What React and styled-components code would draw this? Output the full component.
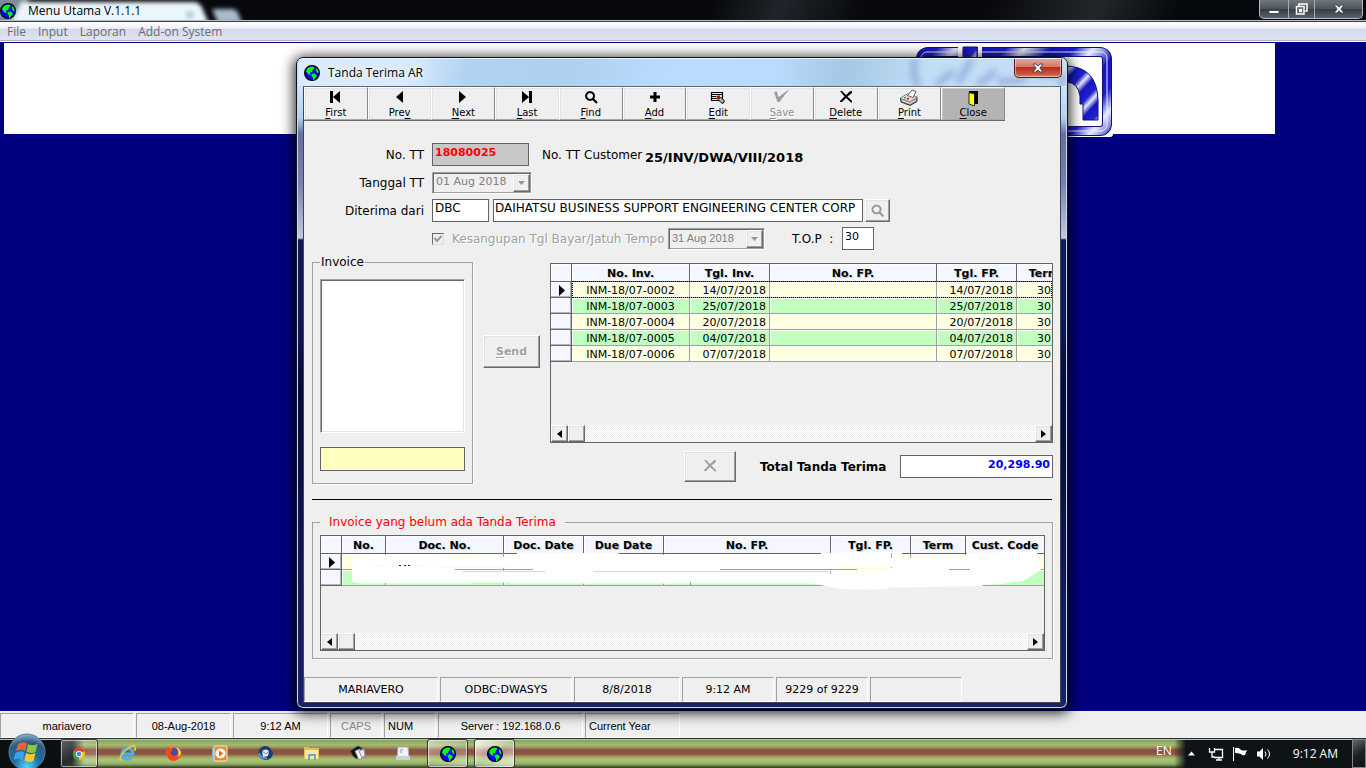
import React from "react";
import styled, { createGlobalStyle, css } from "styled-components";

const UI = `"DejaVu Sans", sans-serif`;
const AERO = `"Open Sans", "Noto Sans", sans-serif`;
const SANS = `"Liberation Sans", sans-serif`;

const Global = createGlobalStyle`
  *, *::before, *::after { box-sizing: border-box; }
  body { margin: 0; background: #000080; font-family: ${UI}; font-size: 11px; color: #000; }
  button, input, select { font: inherit; color: inherit; margin: 0; border-radius: 0; }
  u { text-underline-offset: 2px; }
`;

const raised = css`
  border: 1px solid;
  border-color: #fff #696969 #696969 #fff;
  box-shadow: inset -1px -1px 0 #a0a0a0, inset 1px 1px 0 #e3e3e3;
  background: #efefef;
`;

/* ---------- main window ---------- */
const Screen = styled.div`
  display: flex;
  flex-direction: column;
  min-height: 100vh;
`;
const TitleBar = styled.header`
  position: relative;
  height: 22px;
  display: flex;
  align-items: center;
  gap: 12px;
  font: 12px/20px ${AERO};
  overflow: hidden;
  border-bottom: 1px solid #3a3f48;
  box-shadow: inset 0 -1px 0 #b9bec6;
  background: linear-gradient(115deg, #07090c 0 52%, #20252b 57%, #07090c 63% 72%, #22262b 80%, #05080c 86%);
  h1 { position: relative; font: inherit; margin: 0; }
  & > svg { position: relative; }
`;
const TabGlow = styled.svg`
  && { position: absolute; left: 0; top: 0; }
`;
const CaptionButtons = styled.div`
  position: absolute;
  right: 3px;
  top: 0;
  display: flex;
  height: 19px;
  border: 1px solid #b7bdc4;
  border-top: 0;
  border-radius: 0 0 5px 5px;
  background: linear-gradient(#70777e, #4c535a 50%, #363d44 52%, #5a636b);
`;
const CaptionButton = styled.button`
  width: ${(p) => p.$w}px;
  padding: 0;
  border: 0;
  border-right: 1px solid #a4abb2;
  background: none;
  display: grid;
  place-items: center;
  &:last-child { border-right: 0; }
`;
const MenuBar = styled.nav`
  height: 20px;
  display: flex;
  align-items: center;
  gap: 12px;
  padding: 1px 7px 0;
  font: 12px/18px ${AERO};
  border-bottom: 1px solid #fff;
  box-shadow: inset 0 -1px 0 #b0b4c4;
  background: linear-gradient(#fff, #eef0f7 33%, #d5daec 36%, #e0e4f4);
  a { color: #6d6d6d; text-decoration: none; }
`;
const Workspace = styled.main`
  position: relative;
  z-index: 1;
  flex: 1;
  min-height: 669px;
  padding: 1px 91px 0 4px;
  background: #000080;
`;
const Banner = styled.div`
  height: 91px;
  background: #fff;
  display: flex;
  justify-content: flex-end;
  padding: 3px 162px 0 0;
  svg { flex: none; }
`;
const AppStatus = styled.footer`
  height: 27px;
  display: flex;
  gap: 2px;
  padding: 2px 0 0;
  background: #efefef;
  font: 11px/24px ${SANS};
`;
const Panel = styled.div`
  width: ${(p) => p.$w}px;
  height: 25px;
  line-height: 24px;
  padding: 0 3px;
  white-space: nowrap;
  text-align: ${(p) => p.$align || "center"};
  color: ${(p) => (p.$off ? "#8a8a8a" : "#000")};
  border: 1px solid;
  border-color: #a0a0a0 #fff #fff #a0a0a0;
`;

/* ---------- dialog ---------- */
const Dialog = styled.section`
  position: absolute;
  left: 296px;
  top: 15px;
  width: 772px;
  padding: 0 6px 5px;
  border: 1px solid #10131c;
  border-radius: 7px;
  box-shadow: inset 0 0 0 1px #c9d8ea, 0 2px 13px 2px rgba(0, 0, 0, 0.85);
  background: linear-gradient(#cde3fa 0 30px, #b4d0f2 60px, #676ea2 76px, #7880b0 125px, #c3c8e0 180px, #101858 182px, #101858 260px, #050a38 330px, #1a2268);
`;
const DialogTitle = styled.header`
  position: relative;
  height: 28px;
  margin: 0 -5px;
  padding: 0 5px 0 6px;
  display: flex;
  align-items: center;
  gap: 8px;
  border-radius: 6px 6px 0 0;
  border-top: 1px solid #eaf4ff;
  background: linear-gradient(100deg, #dcebfa 0, #d7eafd 15%, #b1d3f1 22%, #aed1f0 35%, #bcdcff 50%, #b9dbfd 62%, #a6c8e5 71%, #c1def5 82%, #c7dcf3);
  overflow: hidden;
  font: 12px/24px ${AERO};
  h2 { position: relative; font: inherit; margin: 0; text-shadow: 0 0 7px #fff, 0 0 7px #fff; }
`;
const LogoHaze = styled.svg`
  position: absolute;
  right: 0;
  top: 0;
`;
const RedClose = styled.button`
  position: absolute;
  right: 4px;
  top: -1px;
  width: 48px;
  height: 20px;
  padding: 0;
  display: grid;
  place-items: center;
  border: 1px solid #4c1b1b;
  border-top: 0;
  border-radius: 0 0 5px 5px;
  box-shadow: inset 0 0 0 1px rgba(255, 220, 210, 0.55);
  background: linear-gradient(#e5a99c, #d37b6b 45%, #b42f1c 50%, #c9563f 85%, #e08a70);
`;
const DialogBody = styled.div`
  border: 1px solid #3d4654;
  border-top-color: #5c6878;
  background: #efefef;
`;
const Toolbar = styled.div`
  display: flex;
  width: 701px;
  height: 34px;
  border-bottom: 1px solid #696969;
`;
const ToolButton = styled.button`
  flex: 1;
  min-width: 0;
  padding: 1px 0 0;
  display: flex;
  flex-direction: column;
  align-items: center;
  font-size: 10px;
  line-height: 13px;
  border: 1px solid;
  border-color: #fff ${(p) => (p.$soft ? "#e3e3e3" : "#8a8a8a")} #a8a8a8 #fff;
  background: ${(p) => (p.$hot ? "#b4b4b4" : "#efefef")};
  box-shadow: inset 1px 1px 0 ${(p) => (p.$hot ? "#c8c8c8" : "#e3e3e3")};
  &:disabled { color: #8d8d8d; text-shadow: 1px 1px 0 #fff; }
  svg { flex: none; }
`;
const Form = styled.form`
  display: flex;
  flex-direction: column;
  gap: 5px;
  padding-top: 22px;
`;
const Row = styled.div`
  display: flex;
  align-items: center;
  height: 23px;
  white-space: pre;
`;
const FieldLabel = styled.label`
  width: 120px;
  margin-right: 8px;
  padding-top: 1px;
  font-size: 12px;
  text-align: right;
`;
const SideLabel = styled.label`
  margin-left: ${(p) => p.$gap}px;
  width: ${(p) => p.$w}px;
  padding-top: 1px;
  font-size: 12px;
`;
const Field = styled.input`
  width: ${(p) => p.$w}px;
  height: 23px;
  padding: 0 2px 5px;
  border: 1px solid #646464;
  background: ${(p) => p.$bg || "#fff"};
  color: ${(p) => p.$ink || "#000"};
  font-size: ${(p) => (p.$size === "large" ? 12 : 11)}px;
  font-weight: ${(p) => (p.$bold ? 700 : 400)};
  text-align: ${(p) => (p.$right ? "right" : "left")};
`;
const NameField = styled(Field)`
  margin-left: 4px;
  padding-left: 1px;
`;
const CustomerNo = styled.output`
  padding-top: 5px;
  font-size: 13px;
  font-weight: 700;
`;
const DateBox = styled.div`
  display: flex;
  width: ${(p) => p.$w}px;
  height: 22px;
  border: 1px solid;
  border-color: #a0a0a0 #fff #fff #a0a0a0;
  box-shadow: inset 1px 1px 0 #696969, inset -1px -1px 0 #a0a0a0;
  padding: 1px;
  select {
    flex: 1;
    min-width: 0;
    appearance: none;
    border: 0;
    padding: 0 2px 2px;
    background: none;
    color: #808080;
    opacity: 1;
    font-family: ${(p) => p.$font || UI};
  }
`;
const Drop = styled.span`
  ${raised}
  width: 17px;
  display: grid;
  place-items: center;
`;
const LookupButton = styled.button`
  ${raised}
  width: 25px;
  height: 23px;
  margin-left: 2px;
  padding: 0;
  display: grid;
  place-items: center;
`;
const Tick = styled.input`
  appearance: none;
  width: 12px;
  height: 12px;
  border: 1px solid;
  border-color: #696969 #dcdcdc #dcdcdc #696969;
  background: #efefef;
`;
const TickBox = styled.span`
  position: relative;
  display: grid;
  width: 12px;
  svg { position: absolute; left: 1px; top: 1px; pointer-events: none; }
`;
const TickLabel = styled.label`
  width: 216px;
  margin-left: 8px;
  font-size: 12px;
  color: #a0a0a0;
  text-shadow: 1px 1px 0 #fff;
`;
const Middle = styled.div`
  display: flex;
  align-items: flex-start;
  margin: 5px 7px 0 8px;
`;
const Group = styled.fieldset`
  margin: ${(p) => p.$m || 0};
  min-width: 0;
  padding: ${(p) => p.$pad};
  border: 1px solid #a0a0a0;
  box-shadow: 1px 1px 0 #fff;
  legend {
    height: 14px;
    line-height: 14px;
    padding: 0 ${(p) => p.$lp}px;
    font-size: 12px;
    color: ${(p) => p.$ink || "#000"};
  }
`;
const ListBox = styled.select`
  display: block;
  width: 145px;
  height: 154px;
  margin-bottom: 14px;
  border: 1px solid;
  border-color: #a0a0a0 #fff #fff #a0a0a0;
  box-shadow: inset 1px 1px 0 #696969, inset -1px -1px 0 #e3e3e3;
  background: #fff;
  overflow: hidden;
`;
const YellowField = styled(Field)`
  display: block;
  width: 145px;
  height: 24px;
`;
const PushButton = styled.button`
  ${raised}
  flex: none;
  width: ${(p) => p.$w}px;
  height: ${(p) => p.$h}px;
  margin: ${(p) => p.$m || 0};
  padding: 0;
  display: grid;
  place-items: center;
  font-weight: 700;
  &:disabled { color: #a0a0a0; text-shadow: 1px 1px 0 #fff; }
`;
const RightColumn = styled.div`
  flex: 1;
  min-width: 0;
  padding-top: 8px;
`;
const TotalRow = styled.div`
  display: flex;
  align-items: center;
  justify-content: flex-end;
  margin-top: 8px;
  font-weight: 700;
  label { width: 140px; margin-left: 24px; font-size: 12px; }
`;
const Rule = styled.hr`
  margin: 15px 8px;
  border: 0;
  height: 1px;
  background: #000;
`;

/* ---------- data grid ---------- */
const GridFrame = styled.div`
  position: relative;
  display: flex;
  flex-direction: column;
  justify-content: space-between;
  height: ${(p) => p.$h}px;
  border: 1px solid #646464;
  overflow: hidden;
`;
const GridTable = styled.table`
  table-layout: fixed;
  width: 0;
  border-collapse: separate;
  border-spacing: 0;
  line-height: 13px;
  white-space: nowrap;
  th, td { padding: 2px 0 0; overflow: hidden; }
  thead th {
    height: 18px;
    border: 0 solid #646464;
    border-width: 0 1px 1px 0;
    box-shadow: inset 1px 1px 0 #fff;
    background: #f4f8fe;
    text-shadow: 1px 1px 0 #c4ccd8;
  }
  tbody th {
    height: 16px;
    border: 0 solid #646464;
    border-width: 0 1px 1px 0;
    background: #f4f8fe;
    box-shadow: inset -1px -1px 0 #b4b8be, inset 1px 1px 0 #fff;
  }
  tbody th svg { display: block; margin-left: 8px; }
  td {
    height: 16px;
    border: 0 solid #a0a0a0;
    border-width: 0 1px 1px 0;
    background: #ffffe1;
    box-shadow: inset 1px 1px 0 #fff;
  }
  tbody tr:nth-child(even) td { background: #c0ffc0; }
`;
const Cell = styled.td`
  text-align: ${(p) => p.$align};
  && { padding-right: ${(p) => (p.$align === "right" ? 3 : 0)}px; }
`;
const FocusRow = styled.div`
  position: absolute;
  left: 21px;
  right: 0;
  top: 17px;
  height: 17px;
  border: 1px dotted #000;
`;
const Scroll = styled.div`
  display: flex;
  height: 17px;
  background: repeating-conic-gradient(#fff 0 25%, #efefef 0 50%) 0 0 / 2px 2px;
`;
const ScrollButton = styled.button`
  ${raised}
  width: 17px;
  padding: 0;
  display: grid;
  place-items: center;
  &:last-child { margin-left: auto; }
`;
const Eraser = styled.svg`
  position: absolute;
  left: -1px;
  top: -1px;
`;
const DialogStatus = styled.footer`
  display: flex;
  gap: 2px;
  margin-top: 18px;
`;

/* ---------- taskbar ---------- */
const Taskbar = styled.nav`
  position: relative;
  z-index: 2;
  height: 30px;
  display: flex;
  align-items: center;
  padding-left: 60px;
  border-top: 1px solid #27322c;
  box-shadow: inset 0 1px 0 #b7c9a4;
  color: #fff;
  background:
    linear-gradient(90deg, #0a0f12 0 72px, rgba(10, 15, 18, 0) 84px, rgba(10, 15, 18, 0) 1174px, #0e1416 1186px),
    linear-gradient(#81985e 0, #a4bd70 6px, #95885a 9px, #8d4e42 11px, #8d5544 15px, #a0a666 18px, #a9c774 21px, #93ae67 25px, #2c3720 29px);
`;
const StartOrb = styled.button`
  position: absolute;
  left: 7px;
  top: -6px;
  width: 40px;
  height: 36px;
  padding: 0;
  border: 0;
  background: none;
  overflow: hidden;
`;
const TaskButton = styled.button`
  width: ${(p) => p.$w}px;
  height: 29px;
  margin-right: ${(p) => p.$mr || 0}px;
  padding: 0;
  display: grid;
  place-items: center;
  border: 1px solid ${(p) => (p.$open ? "rgba(20,25,20,.8)" : "transparent")};
  border-radius: 3px;
  box-shadow: ${(p) => (p.$open ? "inset 0 0 0 1px rgba(255,255,255,.55)" : "none")};
  background: ${(p) =>
    p.$open ? `linear-gradient(150deg, rgba(255,255,255,${p.$open}), rgba(255,255,255,${p.$open / 3}) 50%, rgba(255,255,255,${p.$open / 1.3}))` : "none"};
`;
const PinnedIcons = styled.div`
  display: flex;
  gap: 10px;
  margin-right: 6px;
`;
const Tray = styled.div`
  margin-left: auto;
  display: flex;
  align-items: center;
  font: 12px/20px ${AERO};
`;
const Lang = styled.span`
  margin-right: 16px;
  padding-bottom: 5px;
`;
const Clock = styled.time`
  margin: 0 14px 0 21px;
`;
const ShowDesktop = styled.button`
  width: 14px;
  height: 29px;
  padding: 0;
  border: 1px solid #7e8588;
  background: linear-gradient(150deg, #62686b, #1c2224 50%, #0d1113);
`;

/* ---------- drawings ---------- */
const Globe = () => (
  <svg width="16" height="16" viewBox="0 0 16 16" aria-hidden="true">
    <circle cx="8" cy="8" r="7.400" fill="#00f" stroke="#000" strokeWidth="1.200" />
    <path d="M3 4 4.500 2.500 6 2l2-.5L10 2l.5 1.500L9 4v1l-1 1 .5 1.500L7 7l-1 .5V9l1.500 1H6L4 9 3 7.500 2 6.500Z" fill="#0f0" />
    <path d="M12 3l1.500 1.500L14.500 7v1.500L13 7.500 12 6Z" fill="#0f0" />
    <path d="M7.500 10 9 8.500h1.500L12.500 10v2L11 13l-1 2H9v-2.500L8 11.500Z" fill="#0f0" />
  </svg>
);

const XMark = () => (
  <svg width="12" height="10" viewBox="0 0 12 10" aria-hidden="true">
    <path d="M1 1h3l2 2.200L8 1h3L7.800 5 11 9H8L6 6.800 4 9H1l3.200-4Z" fill="#fff" stroke="#464b58" />
  </svg>
);

const shapes = {
  First: <path d="M2 2h3v12H2ZM12 2v12L5 8Z" />,
  Prev: <path d="M11 2v12L4 8Z" />,
  Next: <path d="M4 2v12l7-6Z" />,
  Last: <path d="M3 2v12l7-6ZM10 2h3v12h-3Z" />,
  Find: <path d="M7 3a4 4 0 1 0 .1 0M10 10l4 4" fill="none" stroke="currentColor" strokeWidth="2" />,
  Add: <path d="M6.500 3h3v3.500H13v3H9.500V13h-3V9.500H3v-3h3.500Z" />,
  Edit: (
    <g>
      <path d="M1.500 3.500h11v8h-11ZM1.500 5.500h11M1.500 7.500h5M1.500 9.500h6" fill="none" stroke="#000" strokeWidth="1.200" />
      <path d="M7 6.500h3v3H7Z" fill="#e00000" />
      <path d="m8 10.500 2.500-2.500 4 4-1.500 2.500-2-1Z" fill="#b0b0b0" stroke="#000" />
    </g>
  ),
  Save: (
    <g>
      <path d="m2 4 3 7L15 2 5 8 4 3Z" fill="#fff" transform="translate(1 1)" />
      <path d="M0 3 3 2.500 4.500 8 15.500 0 5.500 13h-2Z" fill="#9c9c9c" />
    </g>
  ),
  Delete: <path d="M2 2h2l4 4 3.500-3.500L14 2v2L9.500 7.500 14 12v1.500h-1L8 9l-4 4H2v-1l4.500-4.500Z" />,
  Print: (
    <g>
      <path d="m-.5 9 7-4 9.500 3v4.500L9 16.500 0 13Z" fill="#8c8c8c" stroke="#111" strokeWidth=".8" />
      <path d="m-.5 9 7-4L16 8l-7 4.500Z" fill="#d7d7d7" />
      <path d="M6.500 6.500 11 1l4 1.500-3 6Z" fill="#fff" stroke="#333" strokeWidth=".8" />
      <path d="m1 11.500 8 3 6-3.500" stroke="#eee" fill="none" />
      <path d="M3 8h2v1.500H3Z" fill="#0c0" />
      <path d="M6 9h2v1.500H6Z" fill="#f00" />
    </g>
  ),
  Close: (
    <g>
      <path d="M4 2h9v13H9V4H4Z" />
      <path d="M4 3.500 9.500 5v12L4 15Z" fill="#ff0" stroke="#000" strokeWidth=".8" />
    </g>
  ),
};
const Icon = ({ name }) => (
  <svg width="18" height="17" viewBox="-1 0 18 17" fill="currentColor" aria-hidden="true">{shapes[name]}</svg>
);
const Arrow = ({ left }) => (
  <svg width="5" height="8" viewBox="0 0 5 8" aria-hidden="true"><path d={left ? "M5 0v8L0 4Z" : "M0 0v8l5-4Z"} /></svg>
);
const DownArrow = () => (
  <svg width="7" height="4" viewBox="0 0 7 4" aria-hidden="true"><path d="M0 0h7L3.500 4Z" fill="#969696" /></svg>
);
const Pointer = () => (
  <svg width="6" height="11" viewBox="0 0 6 11" aria-hidden="true"><path d="M0 0v11l6-5.500Z" /></svg>
);

const Logo = () => (
  <svg width="198" height="92" viewBox="0 0 198 92" aria-hidden="true">
    <defs>
      <linearGradient id="metal" gradientUnits="userSpaceOnUse" x1="0" y1="0" x2="40" y2="34" spreadMethod="repeat">
        <stop offset="0" stopColor="#1414c0" /><stop offset=".35" stopColor="#1c1cc8" />
        <stop offset=".62" stopColor="#e8ecfa" /><stop offset=".8" stopColor="#8c92dc" /><stop offset="1" stopColor="#1414c0" />
      </linearGradient>
      <linearGradient id="metalFine" gradientUnits="userSpaceOnUse" x1="0" y1="0" x2="14" y2="13" spreadMethod="repeat">
        <stop offset="0" stopColor="#1414c0" /><stop offset=".45" stopColor="#2222d0" />
        <stop offset=".7" stopColor="#e8ecfa" /><stop offset="1" stopColor="#1414c0" />
      </linearGradient>
    </defs>
    <rect width="198" height="91" rx="3" fill="#fff" />
    <rect x="6" y="6" width="186" height="79" rx="7" fill="none" stroke="#11117a" strokeWidth="10" />
    <rect x="6" y="6" width="186" height="79" rx="7" fill="none" stroke="url(#metal)" strokeWidth="8" />
    <rect x="6" y="6" width="186" height="79" rx="6" fill="none" stroke="#e8ecff" strokeWidth="1" />
    <path d="M43 0h5v13h-5ZM63 0h4v13h-4Z" fill="#fff" />
    <path d="M48 1h14v14H48Z" fill="url(#metalFine)" stroke="#11117a" />
    <path d="M120 74V50q4-28 30-30 32 0 33 34v20h-15V58h-3v-8q-2-13-13-14-14 2-14 14 2 10 10 8l2 16Z" fill="url(#metalFine)" stroke="#11117a" />
  </svg>
);

const tools = [
  ["First", 0], ["Prev", 3, true], ["Next", 0], ["Last", 0, true], ["Find", 0], ["Add", 0],
  ["Edit", 0, true], ["Save", 0], ["Delete", 0], ["Print", 0], ["Close", 0],
];

const dialogPanels = [["MARIAVERO", 134], ["ODBC:DWASYS", 132], ["8/8/2018", 106], ["9:12 AM", 92], ["9229 of 9229", 92], ["", 92]];
const appPanels = [
  { text: "mariavero", w: 134 }, { text: "08-Aug-2018", w: 95 }, { text: "9:12 AM", w: 95 },
  { text: "CAPS", w: 52, off: true }, { text: "NUM", w: 52, align: "left" },
  { text: "Server : 192.168.0.6", w: 145 }, { text: "Current Year", w: 95, align: "left" },
];

const invoices = [
  ["INM-18/07-0002", "14/07/2018"], ["INM-18/07-0003", "25/07/2018"], ["INM-18/07-0004", "20/07/2018"],
  ["INM-18/07-0005", "04/07/2018"], ["INM-18/07-0006", "07/07/2018"],
].map(([no, date]) => [no, date, "", date, "30"]);

const invoiceCols = [["No. Inv.", 118, "center"], ["Tgl. Inv.", 80, "right"], ["No. FP.", 167, "left"], ["Tgl. FP.", 80, "right"], ["Term", 55, "center"]];
const pendingCols = [
  ["No.", 44], ["Doc. No.", 118], ["Doc. Date", 80], ["Due Date", 80], ["No. FP.", 167], ["Tgl. FP.", 80], ["Term", 55], ["Cust. Code", 79],
];

function DataGrid({ cols, rows, height, focus, children }) {
  return (
    <GridFrame $h={height}>
      <GridTable>
        <colgroup>
          <col width="21" />
          {cols.map(([name, w]) => <col key={name} width={w} />)}
        </colgroup>
        <thead>
          <tr><th aria-label="Row" />{cols.map(([name]) => <th key={name} scope="col">{name}</th>)}</tr>
        </thead>
        <tbody>
          {rows.map((row, i) => (
            <tr key={i}>
              <th scope="row" aria-label={`Row ${i + 1}`}>{i === 0 && <Pointer />}</th>
              {row.map((v, j) => <Cell key={j} $align={cols[j][2]}>{v}</Cell>)}
            </tr>
          ))}
        </tbody>
      </GridTable>
      {focus && <FocusRow />}
      {children}
      <Scroll>
        <ScrollButton type="button" aria-label="Scroll left"><Arrow left /></ScrollButton>
        <ScrollButton type="button" aria-label="Scroll thumb" />
        <ScrollButton type="button" aria-label="Scroll right"><Arrow /></ScrollButton>
      </Scroll>
    </GridFrame>
  );
}

function TandaTerima() {
  return (
    <Dialog aria-label="Tanda Terima AR">
      <DialogTitle>
        <LogoHaze width="180" height="28" viewBox="0 0 180 28" aria-hidden="true">
          <defs><filter id="haze"><feGaussianBlur stdDeviation="3" /></filter></defs>
          <g filter="url(#haze)" fill="none" stroke="#5a6fc0" strokeWidth="6" opacity=".42">
            <path d="M28 0v14l4 14M50 26l18-14M72 24l8-14 6-10M92 26l18-14M112 22h18l12-4M150 16h22M176 14v14" />
          </g>
        </LogoHaze>
        <Globe />
        <h2>Tanda Terima AR</h2>
        <RedClose type="button" aria-label="Close window"><XMark /></RedClose>
      </DialogTitle>
      <DialogBody>
        <Toolbar>
          {tools.map(([name, key, soft]) => (
            <ToolButton key={name} type="button" disabled={name === "Save"} $soft={soft} $hot={name === "Close"}>
              <Icon name={name} />
              <span>{name.slice(0, key)}<u>{name[key]}</u>{name.slice(key + 1)}</span>
            </ToolButton>
          ))}
        </Toolbar>
        <Form onSubmit={(e) => e.preventDefault()}>
          <Row>
            <FieldLabel htmlFor="tt">No. TT</FieldLabel>
            <Field id="tt" $w={97} $bg="#c8c8c8" $ink="#f00" $bold readOnly value="18080025" />
            <SideLabel $gap={13} $w={103} htmlFor="cust">No. TT Customer</SideLabel>
            <CustomerNo id="cust">25/INV/DWA/VIII/2018</CustomerNo>
          </Row>
          <Row>
            <FieldLabel htmlFor="tgl">Tanggal TT</FieldLabel>
            <DateBox $w={100}>
              <select id="tgl" disabled><option>01 Aug 2018</option></select>
              <Drop><DownArrow /></Drop>
            </DateBox>
          </Row>
          <Row>
            <FieldLabel htmlFor="dari">Diterima dari</FieldLabel>
            <Field id="dari" $w={57} $size="large" defaultValue="DBC" />
            <NameField $w={370} $size="large" aria-label="Nama customer" defaultValue="DAIHATSU BUSINESS SUPPORT ENGINEERING CENTER CORP" />
            <LookupButton type="button" disabled aria-label="Cari customer">
              <svg width="14" height="14" viewBox="0 0 14 14" fill="none" aria-hidden="true">
                <path d="M6 3a3.500 3.500 0 1 0 .1 0M9.500 9.500l4 4" stroke="#fff" strokeWidth="2" />
                <path d="M5.500 1.500a4 4 0 1 0 .1 0M8.500 8.500l4 4" stroke="#989898" strokeWidth="2" />
              </svg>
            </LookupButton>
          </Row>
          <Row>
            <FieldLabel as="span" />
            <TickBox>
              <Tick id="tempo" type="checkbox" disabled defaultChecked />
              <svg width="10" height="10" viewBox="0 0 10 10" fill="none" aria-hidden="true"><path d="m1.500 4 2.500 3 4.500-5" stroke="#989898" strokeWidth="2" /></svg>
            </TickBox>
            <TickLabel htmlFor="tempo">Kesangupan Tgl Bayar/Jatuh Tempo</TickLabel>
            <DateBox $w={97} $font={SANS}>
              <select aria-label="Tanggal jatuh tempo" disabled><option>31 Aug 2018</option></select>
              <Drop><DownArrow /></Drop>
            </DateBox>
            <SideLabel $gap={27} $w={50} htmlFor="top">T.O.P  :</SideLabel>
            <Field id="top" $w={32} defaultValue="30" />
          </Row>
        </Form>
        <Middle>
          <Group $pad="10px 7px 12px" $lp={1}>
            <legend>Invoice</legend>
            <ListBox multiple aria-label="Invoice" />
            <YellowField as="input" aria-label="Invoice terpilih" $bg="#ffffc0" />
          </Group>
          <PushButton type="button" disabled $w={57} $h={33} $m="80px 10px 0"><span><u>S</u>end</span></PushButton>
          <RightColumn>
            <DataGrid cols={invoiceCols} rows={invoices} height={180} focus />
            <TotalRow>
              <PushButton type="button" disabled $w={52} $h={31} aria-label="Hapus"><Icon name="Delete" /></PushButton>
              <label htmlFor="total">Total Tanda Terima</label>
              <Field id="total" $w={153} $bold $right $ink="#0000f0" readOnly value="20,298.90" />
            </TotalRow>
          </RightColumn>
        </Middle>
        <Rule />
        <Group $m="0 7px 0 8px" $pad="6px 7px 7px" $lp={9} $ink="#f00">
          <legend>Invoice yang belum ada Tanda Terima</legend>
          <DataGrid cols={pendingCols} rows={[Array(8).fill(""), Array(8).fill("")]} height={116}>
            <Eraser width="725" height="60" viewBox="0 0 725 60" fill="#fff" aria-hidden="true">
              <path d="M32 22 63 20h45l27 2 62-1v-3h100l6 2h198v-2l55-1h26v6h61l4-5 70-1 4 18-4 2-7 5-7 4-10 1-10 2-20 1-1 1-62 1-32 .5-1 1.500-17 .5-30-.5-12-2.500-10-2-4-1H192l-4-1h-34l-2 1H40l-8-2Z" />
              <path d="M135 34.500h78M400 34.500h137M629 34.500h21M721 34.500h3M183.500 18v4M183.500 32v4M370.500 47v3M65.500 48v2M510.500 36v3M571.500 18v5M571.500 32v2" stroke="#a0a0a0" />
              <path d="M143 36.500h39M185 36.500h40M274 36.500h234" stroke="#a8f8a8" />
              <path d="M54 30.500h13M90 30.500h16M118 32.500h72M518 33.500h54" stroke="#ffffc8" />
              <path d="M79 30.500h2m3 0h2m2 0h2" stroke="#222" />
            </Eraser>
          </DataGrid>
        </Group>
        <DialogStatus>
          {dialogPanels.map(([text, w], i) => <Panel key={i} $w={w}>{text}</Panel>)}
        </DialogStatus>
      </DialogBody>
    </Dialog>
  );
}

const taskIcons = {
  Explorer: (
    <g fill="none"><path d="M3 9h11a5.500 5.500 0 1 0-2 4" stroke="#39b4f4" strokeWidth="3" /><path d="M2 15Q-1 12 7 5t9-3-1 3" stroke="#f4c93c" strokeWidth="1.500" /></g>
  ),
  Firefox: (
    <g><circle cx="8.500" cy="8.500" r="7.500" fill="#f47b1c" /><circle cx="9" cy="7" r="4" fill="#3a50b8" /><path d="M1 5q2-4 3-2l4 2q-3 1-2 4 3 4 7 1l3-5q2 9-7 11Q1 15 1 5Z" fill="#f4481c" /><path d="M11 2q5 2 5 7l-3 4q2-6-2-11Z" fill="#ffd23c" /></g>
  ),
  Media: (
    <g><rect x="1" y="3" width="11" height="13" fill="#79b4e4" /><rect x="3" y="1" width="13" height="15" rx="1" fill="#f58a1a" stroke="#dcecf8" /><circle cx="9.500" cy="8.500" r="5" fill="#fff" /><path d="m8 5.500 4.500 3L8 11.500Z" fill="#f06a00" /></g>
  ),
  Thunderbird: (
    <g><path d="M2 5q4-6 10-3l4 5q0 8-8 8-8-2-6-10Z" fill="#1c3c78" /><path d="M5 6q4-3 7 0l-1 5-5 1Z" fill="#e8eef4" /><path d="m5 6 4 3 3-3" stroke="#6884ac" fill="none" /><path d="M2 8q2 6 8 5" stroke="#4f94d8" strokeWidth="2" fill="none" /></g>
  ),
  Folder: (
    <g><path d="M1 2h5l1 1h9v11H1Z" fill="#e5bd58" /><path d="M2 5h13v9H2Z" fill="#f9e7a4" /><path d="M5 15V9h8v6h-2v-4H7v4Z" fill="#63a9d8" /></g>
  ),
  Documents: (
    <g><path d="m1 6 8-5 4 2-5 11-4-3Z" fill="#111" stroke="#555" /><path d="m6 6 5-2 4 8-5 3Z" fill="#fff" stroke="#889" /><path d="m10 6 5-2 1 6-3 3Z" fill="#e8eaf4" stroke="#889" /></g>
  ),
  Printer: (
    <g><path d="M3 2h10l1 12H2Z" fill="#f2f3f4" stroke="#a9b0b8" /><path d="M1 11h14v4H1Z" fill="#ccd2d8" /><path d="M5 5h3M5 7h2" stroke="#8c98a4" fill="none" /></g>
  ),
};

export default function App() {
  return (
    <Screen>
      <Global />
      <TitleBar>
        <TabGlow width="260" height="20" viewBox="0 0 260 20" aria-hidden="true">
          <defs><filter id="soft"><feGaussianBlur stdDeviation="2" /></filter></defs>
          <g filter="url(#soft)">
            <path d="M-8-6h40L12 26H-8Z" fill="#7c8c98" />
            <path d="M22 2h172q6 0 9 8l6 14H10Z" fill="#eaf6fb" />
            <path d="M212 9h20q4 0 6 4l4 10h-24Z" fill="#a9bccb" />
            <circle cx="190" cy="15" r="4" fill="#b4c9dc" />
          </g>
        </TabGlow>
        <Globe />
        <h1>Menu Utama V.1.1.1</h1>
        <CaptionButtons>
          <CaptionButton type="button" aria-label="Minimize" $w={29}>
            <svg width="12" height="12" viewBox="0 0 12 12" aria-hidden="true"><path d="M1 7.500h10v3H1Z" fill="#fff" stroke="#4c535b" /></svg>
          </CaptionButton>
          <CaptionButton type="button" aria-label="Restore" $w={26}>
            <svg width="13" height="12" viewBox="0 0 13 12" fill="none" stroke="#fff" strokeWidth="1.500" aria-hidden="true"><path d="M4 3V1h8v7h-2M1.500 3.500h7.500V11H1.500ZM4.500 6.500h2v2h-2Z" /></svg>
          </CaptionButton>
          <CaptionButton type="button" aria-label="Close" $w={47}><XMark /></CaptionButton>
        </CaptionButtons>
      </TitleBar>
      <MenuBar>
        {["File", "Input", "Laporan", "Add-on System"].map((m) => <a key={m} href="#menu">{m}</a>)}
      </MenuBar>
      <Workspace>
        <Banner><Logo /></Banner>
        <TandaTerima />
      </Workspace>
      <AppStatus>
        {appPanels.map((p) => <Panel key={p.text} $w={p.w} $align={p.align} $off={p.off}>{p.text}</Panel>)}
      </AppStatus>
      <Taskbar>
        <StartOrb type="button" aria-label="Start">
          <svg width="40" height="40" viewBox="0 0 40 40" aria-hidden="true">
            <defs>
              <radialGradient id="orb" cx=".5" cy=".9" r=".9"><stop offset="0" stopColor="#4fd8f8" /><stop offset=".4" stopColor="#1f6ea4" /><stop offset=".75" stopColor="#2c5a84" /><stop offset="1" stopColor="#8fb4cc" /></radialGradient>
            </defs>
            <circle cx="20" cy="19" r="18" fill="url(#orb)" stroke="#5d7f96" />
            <path d="M11 11q5-3 9-.5L18 18q-4-2.500-9 0Z" fill="#f0642c" />
            <path d="M21 11q4 2.500 9.500 0L28.500 19q-5 2-9-.5Z" fill="#8cc83c" />
            <path d="M8.500 20q5-3 9-.5L15.500 27q-4-2.500-9 0Z" fill="#3ca0e8" />
            <path d="M19 20q4 2.500 9.500 0l-2 8q-5 2-9-.5Z" fill="#fcc828" />
          </svg>
        </StartOrb>
        <TaskButton type="button" aria-label="Chrome" $w={38} $mr={11} $open={0.35}>
          <svg width="16" height="16" viewBox="0 0 16 16" aria-hidden="true">
            <circle cx="8" cy="8" r="6" fill="#fbc116" /><path d="M8 8 2.800 5a6 6 0 0 1 10.400 0Z" fill="#e33b2e" /><path d="M8 8 2.800 5A6 6 0 0 0 8 14Z" fill="#2ba24c" /><circle cx="8" cy="8" r="2.800" fill="#4285f4" stroke="#fff" />
          </svg>
        </TaskButton>
        <PinnedIcons>
          {Object.entries(taskIcons).map(([name, art]) => (
            <TaskButton key={name} type="button" aria-label={name} $w={36}>
              <svg width="17" height="17" viewBox="0 0 17 17" aria-hidden="true">{art}</svg>
            </TaskButton>
          ))}
        </PinnedIcons>
        <TaskButton type="button" aria-label="Menu Utama" $w={41} $mr={6} $open={0.5}><Globe /></TaskButton>
        <TaskButton type="button" aria-label="Tanda Terima AR" $w={41} $open={0.9}><Globe /></TaskButton>
        <Tray>
          <Lang>EN</Lang>
          <svg width="84" height="16" viewBox="0 0 84 16" fill="#fff" aria-hidden="true">
            <path d="m0 9.500 3.500-4 3.500 4Z" />
            <path d="M27 3.500h7.500v8H26M24 6v5M28 14h6M31 12v2M21.500 2v4h5V2M24 6v5h3" fill="none" stroke="#fff" strokeWidth="1.300" />
            <path d="M45 1h1v14h-1ZM47 2q3-1 5 1l1 1q3 1 6 0l-2 5q-3 1-4-1-3-1-6-1Z" />
            <path d="M69 5.500h2.500L75 2v12l-3.500-3.500H69Z" />
            <path d="M77 5.500q2 2.500 0 5M79.500 3.500q4 4.500 0 9" fill="none" stroke="#fff" />
          </svg>
          <Clock>9:12 AM</Clock>
          <ShowDesktop type="button" aria-label="Show desktop" />
        </Tray>
      </Taskbar>
    </Screen>
  );
}
